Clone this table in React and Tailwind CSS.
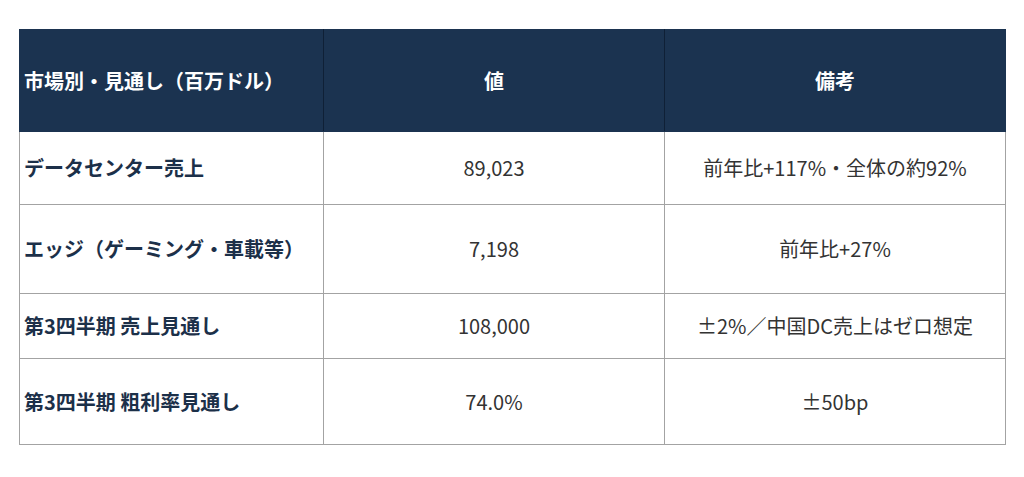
export default function App() {
  const rows = [
    { h: "h-[73px]", a: "データセンター売上", b: "89,023", c: "前年比+117%・全体の約92%" },
    { h: "h-[89px]", a: "エッジ（ゲーミング・車載等）", b: "7,198", c: "前年比+27%" },
    { h: "h-[65px]", a: "第3四半期 売上見通し", b: "108,000", c: "±2%／中国DC売上はゼロ想定" },
    { h: "h-[86px]", a: "第3四半期 粗利率見通し", b: "74.0%", c: "±50bp" },
  ];
  return (
    <div
      className="w-[1024px] h-[477px] bg-white pt-[29px] pl-[19px]"
      style={{ fontFamily: '"Noto Sans CJK JP", "Noto Sans", sans-serif' }}
    >
      <table className="border-collapse w-[986px] table-fixed text-[20px]">
        <colgroup>
          <col className="w-[304px]" />
          <col className="w-[341px]" />
          <col className="w-[341px]" />
        </colgroup>
        <thead>
          <tr className="h-[102px] bg-[#1b3350] text-white font-bold">
            <th className="border border-[#1b3350] border-r-[#0f2036] text-left pl-[4px] font-bold">市場別・見通し（百万ドル）</th>
            <th className="border border-[#1b3350] border-r-[#0f2036] text-center font-bold">値</th>
            <th className="border border-[#1b3350] text-center font-bold">備考</th>
          </tr>
        </thead>
        <tbody>
          {rows.map((r, i) => (
            <tr key={i} className={r.h}>
              <td className="border border-[#a3a3a3] text-left pl-[4px] font-bold text-[#1c3049]">{r.a}</td>
              <td className="border border-[#a3a3a3] text-center text-[#333333]">{r.b}</td>
              <td className="border border-[#a3a3a3] text-center text-[#333333]">{r.c}</td>
            </tr>
          ))}
        </tbody>
      </table>
    </div>
  );
}
